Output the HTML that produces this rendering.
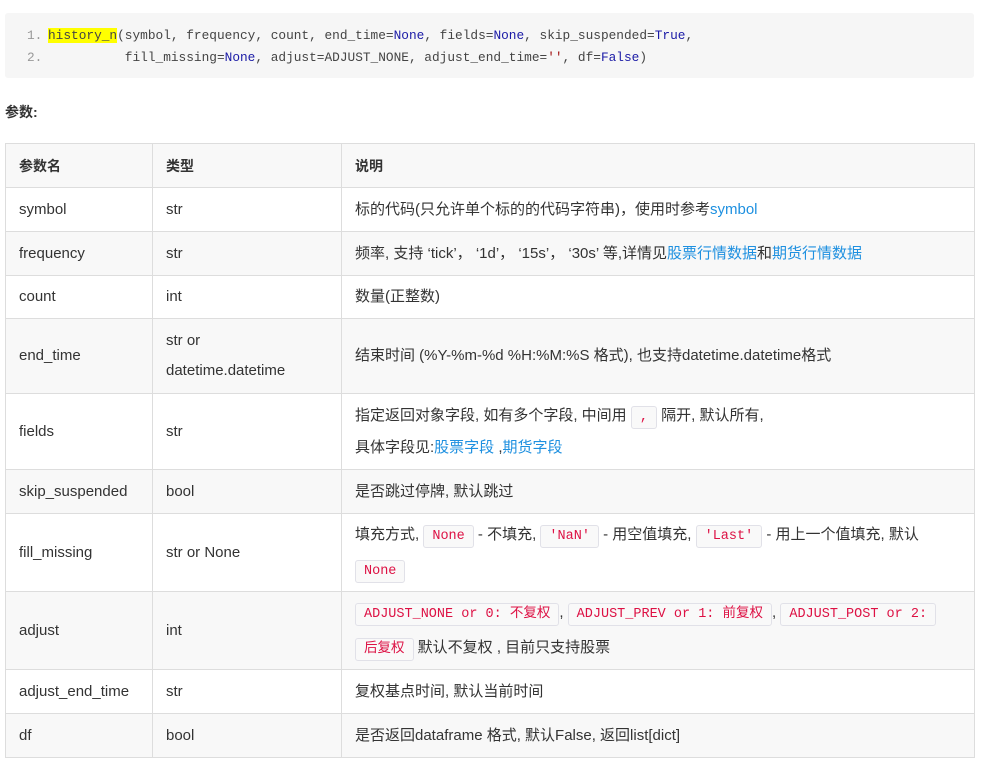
<!DOCTYPE html>
<html><head><meta charset="utf-8"><style>
body{margin:0;background:#fff;width:987px;height:770px;overflow:hidden;font-family:"Liberation Sans","Noto Sans CJK SC",sans-serif;color:#333;font-size:15px}
.code{position:absolute;left:5px;top:13px;width:969px;height:65px;background:#f6f6f6;border-radius:3px;font-family:"Liberation Mono","Noto Sans CJK SC",monospace;font-size:12.8px;color:#444}
.ln{position:absolute;left:22px;color:#999}
.cl{position:absolute;left:43px;white-space:pre}
.kw{color:#1a1aa6}.st{color:#a31515}
.hl{background:#ff0;color:#444}
.p{position:absolute;left:5px;top:102px;font-weight:bold;font-size:14px}
table{position:absolute;left:5px;top:143px;border-collapse:collapse;width:970px;table-layout:fixed}
td,th{border:1px solid #ddd;padding:0 13px;text-align:left;vertical-align:middle;line-height:30px}
th{font-weight:bold;font-size:14px;height:43px}
tr.g{background:#f8f8f8}
a{color:#1e90e0;text-decoration:none}
code{font-family:"Liberation Mono","Noto Sans CJK SC",monospace;font-size:13.5px;color:#d14;background:#f9f9f9;border:1px solid #e1e1e8;border-radius:3px;padding:3px 8px}
</style></head><body>
<div class="code">
<div class="ln" style="top:15px">1.</div><div class="cl" style="top:15px"><span class="hl">history_n</span>(symbol, frequency, count, end_time=<span class="kw">None</span>, fields=<span class="kw">None</span>, skip_suspended=<span class="kw">True</span>,</div>
<div class="ln" style="top:37px">2.</div><div class="cl" style="top:37px">          fill_missing=<span class="kw">None</span>, adjust=ADJUST_NONE, adjust_end_time=<span class="st">''</span>, df=<span class="kw">False</span>)</div>
</div>
<div class="p">参数:</div>
<table>
<colgroup><col style="width:147px"><col style="width:189px"><col></colgroup>
<tr class="g"><th>参数名</th><th>类型</th><th>说明</th></tr>
<tr style="height:44px"><td>symbol</td><td>str</td><td>标的代码(只允许单个标的的代码字符串)，使用时参考<a>symbol</a></td></tr>
<tr class="g" style="height:44px"><td>frequency</td><td>str</td><td>频率, 支持 ‘tick’， ‘1d’， ‘15s’， ‘30s’ 等,详情见<a>股票行情数据</a>和<a>期货行情数据</a></td></tr>
<tr style="height:43px"><td>count</td><td>int</td><td>数量(正整数)</td></tr>
<tr class="g" style="height:75px"><td>end_time</td><td>str or<br>datetime.datetime</td><td>结束时间 (%Y-%m-%d %H:%M:%S 格式), 也支持datetime.datetime格式</td></tr>
<tr style="height:76px"><td>fields</td><td>str</td><td>指定返回对象字段, 如有多个字段, 中间用 <code>,</code> 隔开, 默认所有,<br>具体字段见:<a>股票字段</a> ,<a>期货字段</a></td></tr>
<tr class="g" style="height:44px"><td>skip_suspended</td><td>bool</td><td>是否跳过停牌, 默认跳过</td></tr>
<tr style="height:78px"><td>fill_missing</td><td>str or None</td><td style="line-height:33px">填充方式, <code>None</code> - 不填充, <code>'NaN'</code> - 用空值填充, <code>'Last'</code> - 用上一个值填充, 默认<br><code>None</code></td></tr>
<tr class="g" style="height:78px"><td>adjust</td><td>int</td><td style="line-height:33px"><code>ADJUST_NONE or 0: 不复权</code>, <code>ADJUST_PREV or 1: 前复权</code>, <code>ADJUST_POST or 2:</code><br><code>后复权</code> 默认不复权 , 目前只支持股票</td></tr>
<tr style="height:44px"><td>adjust_end_time</td><td>str</td><td>复权基点时间, 默认当前时间</td></tr>
<tr class="g" style="height:44px"><td>df</td><td>bool</td><td>是否返回dataframe 格式, 默认False, 返回list[dict]</td></tr>
</table>
</body></html>
